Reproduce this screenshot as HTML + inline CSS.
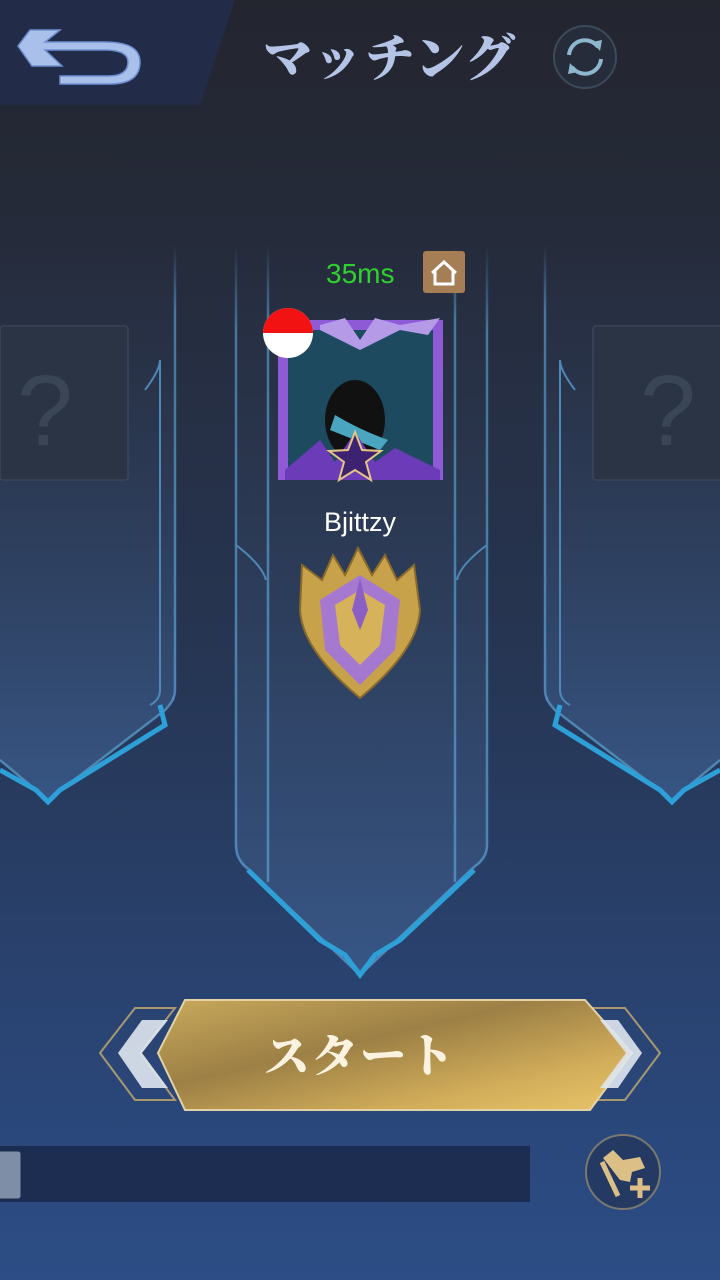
<!DOCTYPE html>
<html><head><meta charset="utf-8"><style>
html,body{margin:0;padding:0}
body{width:720px;height:1280px;overflow:hidden;position:relative;font-family:"Liberation Sans","Noto Sans CJK JP",sans-serif;
background:linear-gradient(180deg,#23252f 0%,#252a38 15%,#263552 50%,#2a4678 85%,#2c4d86 100%);}
.abs{position:absolute}
</style></head><body>
<svg class="abs" style="left:0;top:0" width="720" height="1280" viewBox="0 0 720 1280">
<defs>
<linearGradient id="bn" x1="0" y1="0" x2="0" y2="1">
<stop offset="0" stop-color="#2a3347" stop-opacity="0"/><stop offset=".2" stop-color="#2a3449" stop-opacity=".6"/><stop offset="1" stop-color="#3a5a8a" stop-opacity=".85"/></linearGradient>
<linearGradient id="ln" x1="0" y1="0" x2="0" y2="1">
<stop offset="0" stop-color="#4f88b6" stop-opacity="0"/><stop offset=".12" stop-color="#4f88b6" stop-opacity=".8"/><stop offset="1" stop-color="#4f88b6"/></linearGradient>
<linearGradient id="gold" x1="0" y1="0" x2="1" y2="1">
<stop offset="0" stop-color="#c9a95c"/><stop offset=".4" stop-color="#9c8045"/><stop offset=".75" stop-color="#d2ad5a"/><stop offset="1" stop-color="#e8c56a"/></linearGradient>
</defs>
<!-- top bar left -->
<path d="M0 0H235L200 105H0Z" fill="#222c48"/>
<path d="M30 30H60L45 42H105Q140 42 140 62Q140 84 110 84H60V76H108Q128 76 128 62Q128 50 105 50H45L62 66H32L18 46Z" fill="#a9c0ea" stroke="#6f8fd0" stroke-width="1.5"/>
<!-- refresh -->
<circle cx="585" cy="57" r="31" fill="#262c3a" stroke="#3b4a5c" stroke-width="2"/>
<path d="M569 55A16 16 0 0 1 598 47M601 59A16 16 0 0 1 572 67" fill="none" stroke="#8cb7cf" stroke-width="4"/>
<path d="M592 42L602 40L600 51Z M578 72L568 74L570 63Z" fill="#8cb7cf"/>
<!-- left banner -->
<path d="M0 245H175V700L48 800L0 760Z" fill="url(#bn)"/>
<path d="M175 245V690Q175 700 165 710L48 800L0 760" fill="none" stroke="url(#ln)" stroke-width="2.5"/>
<path d="M145 390Q160 370 160 360V690Q160 700 150 705" fill="none" stroke="#4f88b6" stroke-width="2"/>
<path d="M160 705L165 725L60 790L48 802L36 790L0 770" fill="none" stroke="#2ea0d8" stroke-width="5"/>
<rect x="0" y="326" width="128" height="154" rx="3" fill="#2a3444" stroke="#3a4758" stroke-width="1.5"/>
<text x="45" y="445" font-family="Liberation Sans,sans-serif" font-size="100" fill="#3a4656" text-anchor="middle">?</text>
<!-- right banner -->
<path d="M720 245H545V700L672 800L720 760Z" fill="url(#bn)"/>
<path d="M545 245V690Q545 700 555 710L672 800L720 760" fill="none" stroke="url(#ln)" stroke-width="2.5"/>
<path d="M575 390Q560 370 560 360V690Q560 700 570 705" fill="none" stroke="#4f88b6" stroke-width="2"/>
<path d="M560 705L555 725L660 790L672 802L684 790L720 770" fill="none" stroke="#2ea0d8" stroke-width="5"/>
<rect x="593" y="326" width="140" height="154" rx="3" fill="#2a3444" stroke="#3a4758" stroke-width="1.5"/>
<text x="668" y="445" font-family="Liberation Sans,sans-serif" font-size="100" fill="#3a4656" text-anchor="middle">?</text>
<!-- center banner -->
<path d="M236 245H487V845Q487 858 478 866L360 975L242 866Q236 858 236 845Z" fill="url(#bn)"/>
<path d="M236 245V845Q236 858 245 866L360 975L475 866Q487 858 487 845V245" fill="none" stroke="url(#ln)" stroke-width="2.5"/>
<path d="M268 245V882M455 245V882" stroke="url(#ln)" stroke-width="2.5"/>
<path d="M236 545Q262 565 266 580M487 545Q460 565 457 580" fill="none" stroke="#4f88b6" stroke-width="2"/>
<path d="M248 870L320 940L345 955L360 975L375 955L400 940L474 870" fill="none" stroke="#2ea0d8" stroke-width="5"/>
<!-- start button -->
<path d="M100 1053L135 1008H175L140 1053L175 1100H135Z" fill="none" stroke="#a89870" stroke-width="2"/>
<path d="M660 1053L625 1008H585L620 1053L585 1100H625Z" fill="none" stroke="#a89870" stroke-width="2"/>
<path d="M158 1053L185 1000H585L632 1053L590 1110H185Z" fill="url(#gold)" stroke="#e2d2a5" stroke-width="2"/>
<path d="M118 1053L142 1020L168 1020L142 1053L168 1088L142 1088Z" fill="#dfe6f0" opacity=".9"/>
<path d="M642 1053L618 1020L600 1020L626 1053L600 1088L618 1088Z" fill="#dfe6f0" opacity=".9"/>
<!-- bottom bar -->
<rect x="0" y="1146" width="530" height="56" fill="#1d2d52"/>
<rect x="-10" y="1150" width="32" height="50" rx="4" fill="#7d8ea6" stroke="#1d2d52" stroke-width="3"/>
<circle cx="623" cy="1172" r="37" fill="#243a62" stroke="#7a7870" stroke-width="2"/>
<path d="M603 1158L613 1150L623 1160L640 1157L645 1168L632 1172L630 1182L620 1180Z" fill="#dcbf86"/>
<path d="M602 1162L618 1196" stroke="#dcbf86" stroke-width="5"/>
<path d="M640 1178V1198M630 1188H650" stroke="#dcbf86" stroke-width="5"/>
<!-- avatar -->
<rect x="283" y="325" width="155" height="150" fill="#1d4a5e"/>
<rect x="283" y="325" width="155" height="150" fill="none" stroke="#8e5ad6" stroke-width="10"/>
<ellipse cx="355" cy="420" rx="30" ry="40" fill="#111"/>
<path d="M335 415Q360 430 388 440L380 450Q355 440 330 430Z" fill="#4aa6c0"/>
<path d="M320 325L345 318L360 340L375 318L400 325L440 318L428 335L400 330L360 350L320 330Z" fill="#b59ae8"/>
<path d="M285 470L320 440L335 462L355 432L375 462L395 448L440 470V480H285Z" fill="#6c3bb8"/>
<path d="M355 432L362 450L381 451L366 462L371 480L355 470L339 480L344 462L329 451L348 450Z" fill="#3d2271" stroke="#e6c585" stroke-width="2"/>
<circle cx="288" cy="333" r="25" fill="#fff"/>
<path d="M263 333A25 25 0 0 1 313 333Z" fill="#f21212"/>
<!-- ping house -->
<rect x="423" y="251" width="42" height="42" rx="3" fill="#a57e56"/>
<path d="M432 273L444 262L456 273M435 271V284H453V271" fill="none" stroke="#fff" stroke-width="3"/>
<!-- rank emblem -->
<path d="M302 565L322 580L333 555L345 575L358 548L372 575L385 555L397 580L414 565L420 610Q418 650 360 698Q302 650 300 610Z" fill="#c8a24a" stroke="#8a6a2a" stroke-width="2"/>
<path d="M320 600L360 575L400 600L395 650L360 685L325 650Z" fill="#a679d0"/>
<path d="M335 605L360 590L385 605L380 645L360 665L340 645Z" fill="#d6b25a"/>
<path d="M360 578L368 610L360 630L352 610Z" fill="#8c5fc4"/>
</svg>
<div class="abs" style="left:240px;top:20px;width:300px;text-align:center;font-family:'Noto Serif CJK SC','Noto Sans CJK JP',serif;font-weight:900;font-size:50px;line-height:70px;color:#b4c4e6;letter-spacing:2px">マッチング</div>
<div class="abs" style="left:326px;top:254px;font-size:28px;color:#2fd02f;line-height:40px">35ms</div>
<div class="abs" style="left:260px;top:504px;width:200px;text-align:center;font-size:27px;color:#fff;line-height:36px">Bjittzy</div>
<div class="abs" style="left:230px;top:1020px;width:260px;text-align:center;font-family:'Noto Serif CJK SC','Noto Sans CJK JP',serif;font-weight:900;font-size:46px;line-height:66px;color:#fbf3e0;letter-spacing:2px">スタート</div>
</body></html>
